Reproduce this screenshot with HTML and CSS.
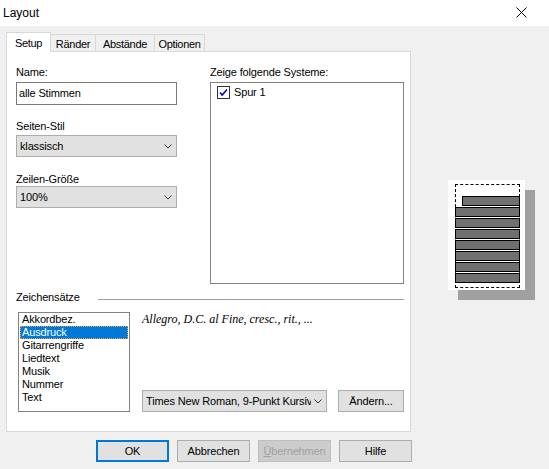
FILE: index.html
```html
<!DOCTYPE html>
<html lang="de">
<head>
<meta charset="utf-8">
<title>Layout</title>
<link rel="stylesheet" href="styles.css">
</head>
<body>
<div class="window">
  <div class="titlebar">
    <span class="title">Layout</span>
    <svg class="close" width="11" height="11" viewBox="0 0 11 11"><path d="M0.5 0.5 L10.5 10.5 M10.5 0.5 L0.5 10.5" stroke="#000" stroke-width="1" fill="none"/></svg>
  </div>
  <div class="main">
    <div class="left">
      <div class="tabs">
        <div class="tab active t-setup">Setup</div>
        <div class="tab t-raender">Ränder</div>
        <div class="tab t-abst">Abstände</div>
        <div class="tab t-opt">Optionen</div>
      </div>
      <div class="panel">
        <div class="top">
          <div class="col-left">
            <div class="label">Name:</div>
            <div class="input">alle Stimmen</div>
            <div class="label l-style">Seiten-Stil</div>
            <div class="select s-style"><span class="sel-text">klassisch</span><svg class="chev" width="8" height="5" viewBox="0 0 8 5"><path d="M0.5 0.5 L4 4 L7.5 0.5" stroke="#333" fill="none"/></svg></div>
            <div class="label l-size">Zeilen-Größe</div>
            <div class="select"><span class="sel-text">100%</span><svg class="chev" width="8" height="5" viewBox="0 0 8 5"><path d="M0.5 0.5 L4 4 L7.5 0.5" stroke="#333" fill="none"/></svg></div>
          </div>
          <div class="col-right">
            <div class="label">Zeige folgende Systeme:</div>
            <div class="syslist">
              <div class="sysitem">
                <svg class="check" width="13" height="13" viewBox="0 0 13 13"><rect x="0.5" y="0.5" width="12" height="12" fill="#fff" stroke="#333"/><path d="M3 6.5 L5.2 9 L10 3.5" stroke="#0000d0" stroke-width="1.6" fill="none"/></svg>
                <span>Spur 1</span>
              </div>
            </div>
          </div>
        </div>
        <div class="group-head"><span>Zeichensätze</span><span class="rule"></span></div>
        <div class="fonts">
          <div class="listbox">
            <div class="item">Akkordbez.</div>
            <div class="item selected">Ausdruck</div>
            <div class="item">Gitarrengriffe</div>
            <div class="item">Liedtext</div>
            <div class="item">Musik</div>
            <div class="item">Nummer</div>
            <div class="item">Text</div>
          </div>
          <div class="fontside">
            <div class="sample">Allegro, D.C. al Fine, cresc., rit., ...</div>
            <div class="fontrow">
              <div class="select fontsel"><span class="sel-text">Times New Roman, 9-Punkt Kursiv</span><svg class="chev" width="8" height="5" viewBox="0 0 8 5"><path d="M0.5 0.5 L4 4 L7.5 0.5" stroke="#333" fill="none"/></svg></div>
              <div class="btn change">Ändern...</div>
            </div>
          </div>
        </div>
      </div>
    </div>
    <div class="preview">
      <div class="page">
        <div class="margins">
          <div class="bar first"></div>
          <div class="bar"></div>
          <div class="bar"></div>
          <div class="bar"></div>
          <div class="bar"></div>
          <div class="bar"></div>
          <div class="bar"></div>
          <div class="bar"></div>
        </div>
      </div>
    </div>
  </div>
  <div class="buttons">
    <div class="btn default">OK</div>
    <div class="btn">Abbrechen</div>
    <div class="btn disabled"><u>Ü</u>bernehmen</div>
    <div class="btn">Hilfe</div>
  </div>
</div>
</body>
</html>
```
FILE: styles.css
```css
* { box-sizing: border-box; }
html, body { margin: 0; padding: 0; }
body {
  font-family: "Liberation Sans", Arial, sans-serif;
  font-size: 11px;
  line-height: 13px;
  letter-spacing: -0.15px;
  color: #000;
  background: #f0f0f0;
}
.window {
  width: 549px;
  height: 469px;
  background: #f0f0f0;
  overflow: hidden;
}
.titlebar {
  height: 26px;
  background: #fff;
  display: flex;
  align-items: flex-start;
  justify-content: space-between;
  padding: 0 22px 0 3px;
}
.title {
  font-size: 12px;
  line-height: 16px;
  letter-spacing: 0;
  margin-top: 5px;
}
.close { margin-top: 7px; }
.main {
  display: flex;
  align-items: flex-start;
}
.left {
  margin-left: 6px;
  margin-top: 6px;
  width: 405px;
}
.tabs {
  display: flex;
  align-items: flex-end;
  height: 19px;
}
.tab {
  height: 17px;
  padding-top: 3px;
  border: 1px solid #d9d9d9;
  border-bottom: none;
  border-left: none;
  background: #f0f0f0;
  white-space: nowrap;
  text-align: center;
  letter-spacing: -0.3px;
}
.tab.active {
  height: 20px;
  margin-bottom: -1px;
  padding-top: 4px;
  background: #fff;
  border-left: 1px solid #d9d9d9;
  position: relative;
  z-index: 1;
}
.t-setup { width: 45px; }
.t-raender { width: 45px; }
.t-abst { width: 59px; }
.t-opt { width: 50px; }
.panel {
  height: 381px;
  background: #fff;
  border: 1px solid #d9d9d9;
  padding: 14px 6px 0 9px;
}
.top {
  display: flex;
  gap: 33px;
}
.col-left { width: 161px; }
.col-right { width: 194px; }
.input {
  margin-top: 3px;
  height: 23px;
  border: 1px solid #7a7a7a;
  padding: 4px 2px 0;
  white-space: nowrap;
}
.l-style { margin-top: 15px; }
.s-style { margin-top: 2px; }
.l-size { margin-top: 16px; }
.select {
  height: 22px;
  background: #e1e1e1;
  border: 1px solid #adadad;
  display: flex;
  align-items: center;
  padding: 0 4px 0 3px;
}
.sel-text {
  flex: 1;
  white-space: nowrap;
  overflow: hidden;
}
.chev { flex: none; margin-left: 3px; }
.syslist {
  margin-top: 3px;
  height: 202px;
  border: 1px solid #828282;
  padding: 3px 0 0 6px;
}
.sysitem {
  display: flex;
  align-items: center;
  gap: 4px;
  height: 13px;
}
.check { flex: none; }
.group-head {
  margin-top: 7px;
  display: flex;
  align-items: flex-start;
}
.rule {
  flex: 1;
  height: 1px;
  margin: 8px 0 0 18px;
  background: #a0a0a0;
}
.fonts {
  margin-top: 8px;
  display: flex;
  gap: 12px;
}
.listbox {
  margin-left: 2px;
  width: 112px;
  height: 100px;
  border: 1px solid #828282;
  padding: 0 1px;
}
.item {
  height: 13px;
  padding-left: 2px;
  white-space: nowrap;
}
.item.selected {
  background: #0078d7;
  color: #fff;
  outline: 1px dotted #f0a030;
  outline-offset: -1px;
}
.fontside {
  flex: 1;
  display: flex;
  flex-direction: column;
}
.sample {
  font-family: "Liberation Serif", "Times New Roman", serif;
  font-style: italic;
  font-size: 12px;
  line-height: 14px;
  letter-spacing: 0;
  white-space: nowrap;
}
.fontrow {
  margin-top: auto;
  display: flex;
  gap: 11px;
}
.fontsel { width: 185px; }
.btn {
  height: 22px;
  background: #e1e1e1;
  border: 1px solid #adadad;
  display: flex;
  align-items: center;
  justify-content: center;
  white-space: nowrap;
}
.change { width: 66px; }
.preview {
  margin-left: 37px;
  margin-top: 154px;
}
.page {
  width: 77px;
  height: 110px;
  background: #fff;
  box-shadow: 10px 10px 0 #a0a0a0;
  padding: 4px 0 0 7px;
}
.margins {
  width: 65px;
  height: 104px;
  border: 1px dashed #000;
  padding-top: 11px;
  display: flex;
  flex-direction: column;
  gap: 1px;
}
.bar {
  height: 10px;
  margin: 0 -1px;
  background: #707070;
  border: 1px solid #000;
  flex: none;
}
.bar.first { margin-left: 6px; }
.buttons {
  margin-top: 8px;
  padding-left: 96px;
  display: flex;
  gap: 8px;
}
.buttons .btn { width: 73px; }
.btn.default { border: 2px solid #0078d7; }
.btn.disabled {
  background: #cccccc;
  border-color: #bfbfbf;
  color: #a0a0a0;
}
.btn.disabled u { text-decoration: underline; }
```
